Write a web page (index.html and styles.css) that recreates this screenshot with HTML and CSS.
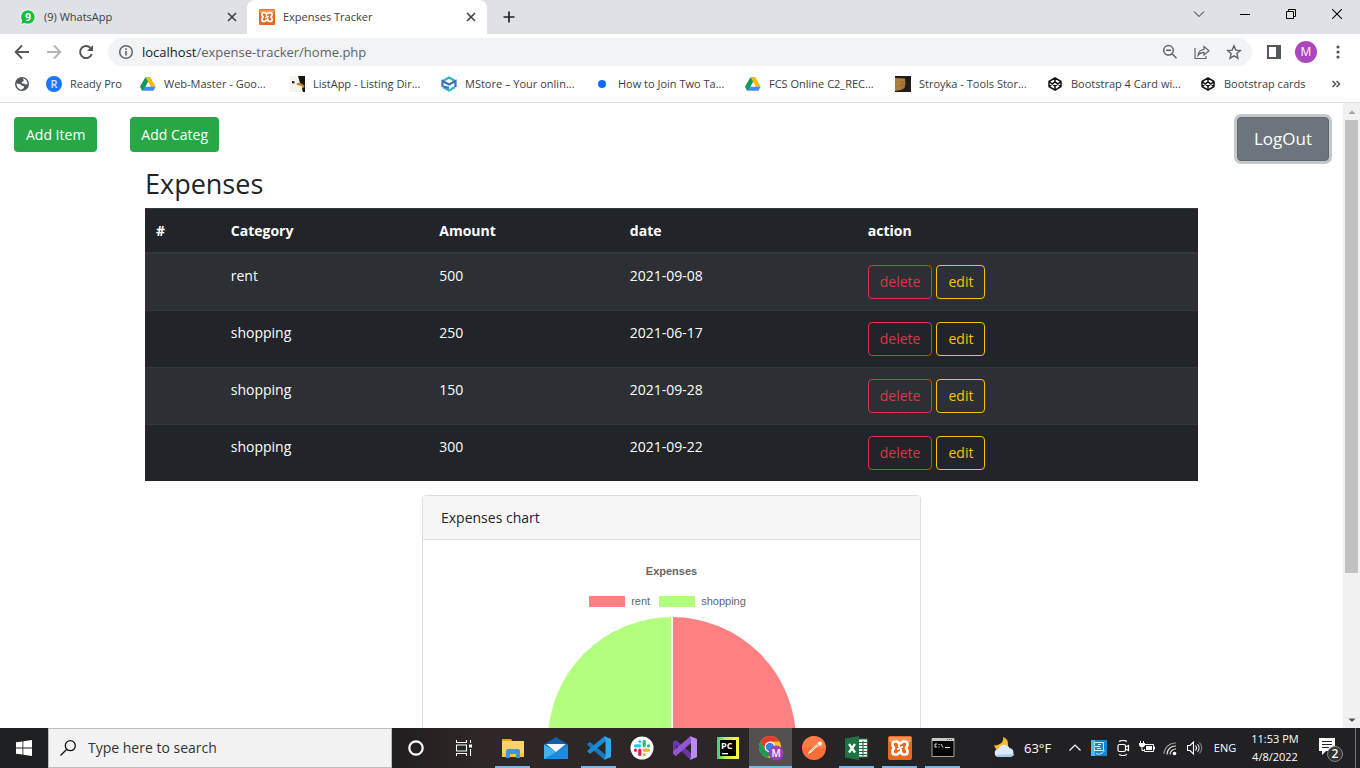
FILE: index.html
```html
<!DOCTYPE html>
<html lang="en">
<head>
<meta charset="utf-8">
<title>Expenses Tracker</title>
<link rel="stylesheet" href="styles.css">
</head>
<body>
<svg class="defs" aria-hidden="true">
  <symbol id="drive" viewBox="0 0 16 16">
    <path fill="#0f9d58" d="M5.4 1.5h5L4 12.6 1.5 14.3.3 10.6z"/>
    <path fill="#ffba00" d="M5.6 1.5h4.9l5.2 9.1h-5z"/>
    <path fill="#4688f4" d="M3 10.6h12.7l-2.4 4.1H2.7L.3 10.6z"/>
    <path fill="#fff" d="M8 6l2.600 4.600H5.300z"/>
    <path fill="#0f9d58" d="M5.400 1.500L8 6 2.700 14.700.300 10.600z"/>
  </symbol>
  <symbol id="codepen" viewBox="0 0 16 16">
    <path fill="none" stroke="#111" stroke-width="1.500" stroke-linejoin="round" d="M8 1.800l6 3.700v5L8 14.200l-6-3.700v-5zM8 1.800v4M8 10.200v4M2 5.500l6 4.700 6-4.700M2 10.500l6-4.700 6 4.700"/>
  </symbol>
  <symbol id="xampp" viewBox="0 0 24 24">
    <rect width="24" height="24" rx="2" fill="#e8681c"/>
    <path d="M1 1h22v5H1z" fill="#f4945a"/>
    <path fill="none" stroke="#fff" stroke-width="2.700" stroke-linejoin="round" d="M8.500 5.500H7a2.500 2.500 0 0 0-2.500 2.500v1C4.500 10.500 6 11 6 12s-1.500 1.500-1.500 3v1A2.500 2.500 0 0 0 7 18.500h1.500c1.500 0 1.500-1.800 3.500-1.800s2 1.800 3.500 1.800H17a2.500 2.500 0 0 0 2.500-2.500v-1c0-1.500-1.500-2-1.500-3s1.500-1.500 1.500-3V8A2.500 2.500 0 0 0 17 5.500h-1.500c-1.500 0-1.500 1.800-3.500 1.800s-2-1.800-3.500-1.800z"/>
    <path fill="none" stroke="#fff" stroke-width="2" d="M9 13.300l6-2.600M11 8v3M13 13v3.500"/>
  </symbol>
  <symbol id="cross" viewBox="0 0 10 10">
    <path fill="none" stroke="currentColor" stroke-width="1.600" d="M1 1l8 8M9 1L1 9"/>
  </symbol>
</svg>

<div class="window">
  <header class="browser">
    <div class="tabstrip">
      <div class="tab">
        <svg class="i16" viewBox="0 0 16 16"><path fill="#12c143" stroke="#fff" stroke-width="1" d="M.5 15.500l1.100-3.900A7.200 7.200 0 1 1 4.700 14.500z"/><text x="8" y="11.500" class="wa">9</text></svg>
        <span class="tab-title">(9) WhatsApp</span>
        <button class="tab-close" aria-label="Close tab"><svg class="i10"><use href="#cross"/></svg></button>
      </div>
      <div class="tab active">
        <svg class="i16"><use href="#xampp"/></svg>
        <span class="tab-title">Expenses Tracker</span>
        <button class="tab-close" aria-label="Close tab"><svg class="i10"><use href="#cross"/></svg></button>
      </div>
      <button class="newtab" aria-label="New tab"><svg class="i12" viewBox="0 0 12 12"><path fill="none" stroke="#202124" stroke-width="1.700" d="M6 .500v11M.500 6h11"/></svg></button>
      <div class="winctl">
        <button aria-label="Search tabs"><svg class="i12" viewBox="0 0 12 12"><path fill="none" stroke="#222" d="M1 3.500l5 5 5-5"/></svg></button>
        <button aria-label="Minimize"><svg class="i10" viewBox="0 0 10 10"><path fill="none" stroke="#000" d="M0 5.500h10"/></svg></button>
        <button aria-label="Restore"><svg class="i10" viewBox="0 0 10 10"><path fill="none" stroke="#000" d="M.500 2.500h7v7h-7zM2.500 2.500v-2h7v7h-2"/></svg></button>
        <button aria-label="Close"><svg class="i10" viewBox="0 0 10 10"><path fill="none" stroke="#000" stroke-width="1.100" d="M0 0l10 10M10 0L0 10"/></svg></button>
      </div>
    </div>

    <div class="toolbar">
      <button class="nav" aria-label="Back"><svg class="i16" viewBox="0 0 16 16"><path fill="none" stroke="#54575b" stroke-width="1.900" d="M15 8H2M8 1.500L1.700 8 8 14.500"/></svg></button>
      <button class="nav" aria-label="Forward"><svg class="i16" viewBox="0 0 16 16"><path fill="none" stroke="#b4b6b9" stroke-width="1.900" d="M1 8h13M8 1.500L14.300 8 8 14.500"/></svg></button>
      <button class="nav" aria-label="Reload"><svg class="i16" viewBox="0 0 16 16"><path fill="none" stroke="#54575b" stroke-width="2" d="M13.800 10A6 6 0 1 1 12.500 4"/><path fill="#54575b" d="M15 1v6H9z"/></svg></button>
      <div class="omnibox">
        <svg class="i16" viewBox="0 0 16 16"><circle cx="8" cy="8" r="6.300" fill="none" stroke="#5f6368" stroke-width="1.500"/><path stroke="#5f6368" stroke-width="1.600" d="M8 7v4.500M8 4.300v1.600"/></svg>
        <a class="url" href="#"><b>localhost</b>/expense-tracker/home.php</a>
        <button class="nav" aria-label="Zoom"><svg class="i16" viewBox="0 0 16 16"><g fill="none" stroke="#5f6368" stroke-width="1.500"><circle cx="6.500" cy="6.300" r="4.800"/><path d="M10 9.800l4.500 4.500M4 6.300h5"/></g></svg></button>
        <button class="nav" aria-label="Share"><svg class="i16" viewBox="0 0 16 16"><path fill="none" stroke="#5f6368" stroke-width="1.200" d="M1 4v10.500h11V12M4 11.300c.500-3.800 2.500-5.500 6-5.800V2.500l5 4.300-5 4.200V8.300C7.500 8.300 5.500 9.300 4 11.300z"/></svg></button>
        <button class="nav" aria-label="Bookmark this page"><svg class="i16" viewBox="0 0 16 16"><path fill="none" stroke="#5f6368" stroke-width="1.400" d="M8 1.800l1.800 4.300 4.600.400-3.500 3.100 1 4.600L8 11.800l-3.900 2.400 1-4.600L1.600 6.500l4.600-.4z"/></svg></button>
      </div>
      <button class="nav" aria-label="Side panel"><svg class="i16" viewBox="0 0 16 16"><path fill="#54575b" d="M1 1h14v14H1zM3 3v10h7V3z" fill-rule="evenodd"/></svg></button>
      <button class="nav" aria-label="Profile"><span class="avatar">M</span></button>
      <button class="nav" aria-label="Menu"><svg class="i16" viewBox="0 0 16 16"><g fill="#54575b"><circle cx="8" cy="3" r="1.600"/><circle cx="8" cy="8" r="1.600"/><circle cx="8" cy="13" r="1.600"/></g></svg></button>
    </div>

    <nav class="bookmarks">
      <a href="#" class="bm globe" aria-label="Apps"><svg class="i16" viewBox="0 0 16 16"><circle cx="8" cy="8" r="7" fill="#54575b"/><path fill="#fff" d="M9 2.500c2.600.4 4.500 2.500 4.500 5.300l-1.700 1-1.700-1.300H8.300L7.500 6.200 9.800 5zM2.500 7.500l4 .7 1.300 1.500 2.400.6-.4 1.800-2 1.500C4.600 13.300 2.500 11 2.500 7.500z"/></svg></a>
      <a href="#" class="bm ready"><svg class="i16" viewBox="0 0 16 16"><circle cx="8" cy="8" r="8" fill="#1877f8"/><text x="8" y="12" class="rr">R</text></svg>Ready Pro</a>
      <div class="bmgrid">
        <a href="#" class="bm"><svg class="i16"><use href="#drive"/></svg>Web-Master - Goo...</a>
        <a href="#" class="bm"><svg class="i16" viewBox="0 0 16 16"><path fill="#f4f4f1" d="M0 0h16v16H0z"/><path fill="#16120f" d="M9 0h7v16h-2l-1-3 1-3-3-3zM3 5l2.500.5V7.500L3 7z"/><path fill="#c9812c" d="M7.500 7.500l3-1 5 3-.5 2.500-3-2-4-1z"/></svg>ListApp - Listing Dir...</a>
        <a href="#" class="bm"><svg class="i16" viewBox="0 0 16 16"><path fill="none" stroke="#35b8c5" stroke-width="2.400" stroke-linejoin="round" d="M2 5l6-3.500L14 5M2 11l6 3.500 6-3.500"/><path fill="none" stroke="#3e6fba" stroke-width="2.200" d="M1.500 11V5L8 8.500 14.500 5v6M3 10.500l5 1.500"/></svg>MStore – Your onlin...</a>
        <a href="#" class="bm"><svg class="i16" viewBox="0 0 16 16"><circle cx="8" cy="8" r="4" fill="#0b6cff"/></svg>How to Join Two Ta...</a>
        <a href="#" class="bm"><svg class="i16"><use href="#drive"/></svg>FCS Online C2_REC...</a>
        <a href="#" class="bm"><svg class="i16" viewBox="0 0 16 16"><path fill="#201c1a" d="M0 0h16v16H0z"/><path fill="#b07b3e" d="M0 2l10 .500.500 5L9.500 12 6 14l-6 1z"/><path stroke="#8a5c2c" d="M6 6h4M5 9h5M6 12h3"/></svg>Stroyka - Tools Stor...</a>
        <a href="#" class="bm"><svg class="i16"><use href="#codepen"/></svg>Bootstrap 4 Card wi...</a>
      </div>
      <a href="#" class="bm last"><svg class="i16"><use href="#codepen"/></svg>Bootstrap cards</a>
      <button class="nav" aria-label="More bookmarks"><svg class="i10" viewBox="0 0 10 10"><path fill="none" stroke="#54575b" stroke-width="1.600" d="M1.500 2L4.500 5 1.500 8M5.500 2l3 3-3 3"/></svg></button>
    </nav>
  </header>

  <div class="viewport">
    <main class="page">
      <div class="actions">
        <button class="btn green">Add Item</button>
        <button class="btn green">Add Categ</button>
        <button class="btn logout">LogOut</button>
      </div>
      <section class="container">
        <h2>Expenses</h2>
        <table>
          <colgroup><col class="c1"><col class="c2"><col class="c3"><col class="c4"><col class="c5"></colgroup>
          <thead><tr><th>#</th><th>Category</th><th>Amount</th><th>date</th><th>action</th></tr></thead>
          <tbody>
            <tr><td></td><td>rent</td><td>500</td><td>2021-09-08</td><td><div class="rowbtns"><button class="btn del">delete</button><button class="btn edit">edit</button></div></td></tr>
            <tr><td></td><td>shopping</td><td>250</td><td>2021-06-17</td><td><div class="rowbtns"><button class="btn del">delete</button><button class="btn edit">edit</button></div></td></tr>
            <tr><td></td><td>shopping</td><td>150</td><td>2021-09-28</td><td><div class="rowbtns"><button class="btn del">delete</button><button class="btn edit">edit</button></div></td></tr>
            <tr><td></td><td>shopping</td><td>300</td><td>2021-09-22</td><td><div class="rowbtns"><button class="btn del">delete</button><button class="btn edit">edit</button></div></td></tr>
          </tbody>
        </table>
      </section>
      <section class="card">
        <div class="card-head">Expenses chart</div>
        <div class="chart">
          <div class="chart-title">Expenses</div>
          <div class="legend"><span class="key red"></span><span>rent</span><span class="key lime"></span><span>shopping</span></div>
          <svg class="pie" viewBox="0 0 248 248"><path fill="#ff8080" d="M124 0a124 124 0 0 1 0 248z"/><path fill="#b2ff80" d="M124 0a124 124 0 0 0 0 248z"/><path stroke="#fff" stroke-width="2" d="M124 0v248"/></svg>
        </div>
      </section>
    </main>
    <div class="scrollbar">
      <span class="arrow"><svg class="i10" viewBox="0 0 10 10"><path fill="#a3a3a3" d="M1.500 7L5 3.500 8.500 7z"/></svg></span>
      <span class="thumb"></span><span class="rest"></span>
      <span class="arrow"><svg class="i10" viewBox="0 0 10 10"><path fill="#505050" d="M1.500 3.500L5 7l3.500-3.500z"/></svg></span>
    </div>
  </div>

  <footer class="taskbar">
    <button class="cell" aria-label="Start"><svg class="i16" viewBox="0 0 16 16"><path fill="#fff" d="M0 2.300L6.500 1.400v6.200H0zM7.300 1.300L16 0v7.600H7.300zM0 8.400h6.500v6.200L0 13.700zM7.300 8.400H16V16l-8.700-1.300z"/></svg></button>
    <label class="search">
      <svg class="i16" viewBox="0 0 16 16"><g fill="none" stroke="#111" stroke-width="1.300"><circle cx="10.300" cy="5.700" r="5"/><path d="M6.800 9.200L.500 15.500"/></g></svg>
      <input type="text" placeholder="Type here to search" aria-label="Type here to search">
    </label>
    <button class="cell" aria-label="Cortana"><svg class="i16" viewBox="0 0 16 16"><circle cx="8" cy="8" r="6.700" fill="none" stroke="#fff" stroke-width="2.200"/></svg></button>
    <button class="cell" aria-label="Task view"><svg class="i16" viewBox="0 0 16 16"><g fill="none" stroke="#fff" stroke-width="1.100"><path d="M.500 0v2.500h10V0M.500 16v-2.500h10V16M.500 5h10v6H.500zM14.500 0v3M14.500 9v7"/></g><path fill="#fff" d="M13 4.500h3v3h-3z"/></svg></button>
    <div class="apps">
      <button class="app run" aria-label="File Explorer"><svg class="i24" viewBox="0 0 24 24"><path fill="#e8a409" d="M1 3h9l2 3H1z"/><path fill="#fdd367" d="M1 5h22v16H1z"/><path fill="#f9c445" d="M1 17h22v4H1z"/><path fill="#3e95dc" d="M5 22v-7a2 2 0 0 1 2-2h10a2 2 0 0 1 2 2v7h-4v-4H9v4z"/></svg></button>
      <button class="app" aria-label="Mail"><svg class="i24" viewBox="0 0 24 24"><path fill="#0d5fb0" d="M0 8.500L12 1l12 7.500-12 7z"/><path fill="#3fb3f0" d="M0 8.500L12 16l12-7.500V23H0z"/><path fill="#1a8be0" d="M0 23L24 8.500V23z"/><path fill="#3fb3f0" d="M0 8.500V23L12 15.500z"/><path fill="#f2f4f7" d="M2 8h20l-10 8z"/></svg></button>
      <button class="app run" aria-label="Visual Studio Code"><svg class="i24" viewBox="0 0 24 24"><path fill="#1479bd" d="M.500 7.500L3 6l16 13v4l-2 .5L.500 9z"/><path fill="#1b8ad3" d="M.500 15.500L3 18 19 5V1L17 .5.500 14.500z"/><path fill="#2fa8f0" d="M17 0l7 3v18l-7 3 1.500-3V3z"/></svg></button>
      <button class="app" aria-label="Slack"><svg class="i24" viewBox="0 0 24 24"><circle cx="12" cy="12" r="11.500" fill="#fff"/><g fill="none" stroke-width="3.200" stroke-linecap="round"><path stroke="#36c5f0" d="M9.800 5.500v.1M5.500 9.800h4.300"/><path stroke="#2eb67d" d="M14.200 5.500v4.300M18.500 9.800v.1"/><path stroke="#ecb22e" d="M14.200 14.200h4.300M14.200 18.500v.1"/><path stroke="#e01e5a" d="M9.800 14.200v4.300M5.500 14.200v.1"/></g></svg></button>
      <button class="app" aria-label="Visual Studio"><svg class="i24" viewBox="0 0 24 24"><path fill="#6a36a8" fill-rule="evenodd" d="M0 5.500L3 4l15 13v6l-1 .5L3 9.500v5L0 18z"/><path fill="#9455d6" d="M0 18l3 2L18 7V1L17 .5 0 15.500z"/><path fill="#b98af0" d="M17 0l7 3v18l-7 3 1-3V3z"/></svg></button>
      <button class="app" aria-label="PyCharm"><svg class="i24" viewBox="0 0 24 24"><defs><linearGradient id="pc"><stop offset="0" stop-color="#21d789"/><stop offset=".4" stop-color="#c8ee48"/><stop offset="1" stop-color="#fcf84a"/></linearGradient></defs><path fill="url(#pc)" d="M1 1h22v22H1z"/><path fill="#000" d="M4 4h16v16H4z"/><text x="5" y="13" class="pc">PC</text><path fill="#fff" d="M6 17h6v1.300H6z"/></svg></button>
      <button class="app run current" aria-label="Chrome"><svg class="i28" viewBox="0 0 28 28"><circle cx="13" cy="13" r="11" fill="#fbc116"/><path fill="#e33b2e" d="M3.500 7.500A11 11 0 0 1 22.500 7.500H13L8 15.500z"/><path fill="#1e9b53" d="M3.500 7.500L8.500 16l5 2-2.500 6A11 11 0 0 1 3.500 7.500z"/><circle cx="13" cy="13" r="5.400" fill="#fff"/><circle cx="13" cy="13" r="4.200" fill="#3b7ded"/><circle cx="19" cy="19" r="7.500" fill="#a63db8"/><text x="19" y="22.500" class="cm">M</text></svg></button>
      <button class="app" aria-label="Postman"><svg class="i24" viewBox="0 0 24 24"><circle cx="12" cy="12" r="12" fill="#ff6c37"/><path fill="#ff8b57" d="M0 12a12 12 0 0 1 24 0z" opacity=".5"/><path fill="#fff" d="M5.500 18.500L8 14.500l6.500-6 1.500 1.500L9.500 16zM15.500 8a2.200 2.200 0 1 1 2 2z"/><path stroke="#ff6c37" stroke-width=".7" d="M8.500 15l6-5"/></svg></button>
      <button class="app run" aria-label="Excel"><svg class="i24" viewBox="0 0 24 24"><path fill="#fff" d="M13 3h9.500v18H13z"/><path fill="none" stroke="#1f7246" stroke-width="1.200" d="M13 3h9.500v18H13M14 6.500h8M14 9.500h8M14 12.500h8M14 15.500h8M14 18.500h8M18 5v15"/><path fill="#1f7246" d="M0 2.500L14 0v24L0 21.500z"/><path stroke="#fff" stroke-width="2.200" d="M4 8l6 8.500M10 8l-6 8.500"/></svg></button>
      <button class="app run" aria-label="XAMPP"><svg class="i24"><use href="#xampp"/></svg></button>
      <button class="app run" aria-label="Command Prompt"><svg class="i24" viewBox="0 0 24 24"><path fill="#050505" stroke="#a5a5a5" d="M1 2.500h22v18H1z"/><path fill="#c8cacc" d="M1 2h22v3H1z"/><path fill="#555" d="M16 3h1v1h-1zM18 3h1v1h-1zM20 3h1v1h-1z"/><path fill="none" stroke="#ddd" d="M6 8H4v3h2M8 8v1M8 10.500v1M10 8l2 3.500M14 11.500h5"/></svg></button>
    </div>
    <div class="tray">
      <button class="weather"><svg class="i24" viewBox="0 0 24 24"><path fill="#fcb827" d="M11 1c1 3.500-1 8-9 8.500C3 12 5 15 9 15s7-3 7-7-2-6-5-7z"/><path fill="#dbe9f8" d="M7 21a4 4 0 0 1-.5-8 6 6 0 0 1 11-1 4.700 4.700 0 0 1 1 9z"/><path fill="#a9cdf3" d="M3.500 19a4 4 0 0 0 3.500 2h11.500a4.700 4.700 0 0 0 4-3z"/></svg>63°F</button>
      <button class="t24" aria-label="Hidden icons"><svg class="i12" viewBox="0 0 12 12"><path fill="none" stroke="#fff" stroke-width="1.200" d="M.500 8.500L6 3l5.500 5.500"/></svg></button>
      <button class="t24" aria-label="Graphics"><svg class="i16" viewBox="0 0 16 16"><path fill="#1384d2" d="M0 0h16v16H0z"/><path fill="#4fb7e9" d="M0 0h4v16H0z"/><g fill="none" stroke="#cfefff"><path d="M3.500 5V2.500h9v8h-9V8M3 6.500h6M6 8.500h4M5 13.500c3 1.500 7 0 8.500-3M7 4.500h3"/></g></svg></button>
      <button class="t24" aria-label="Meet Now"><svg class="i16" viewBox="0 0 16 16"><g fill="none" stroke="#fff" stroke-width="1.200"><rect x="3" y="4.500" width="7.500" height="7" rx="1.500"/><path d="M10.500 7l3-1.500v5l-3-1.500M4 1.500c2.500-1.300 5.500-1.300 8 0M4 14.500c2.500 1.300 5.500 1.300 8 0"/></g></svg></button>
      <button class="t24" aria-label="Battery"><svg class="i16" viewBox="0 0 16 16"><path fill="none" stroke="#fff" d="M4.500 4.500h10v7h-9V9M15.500 6.500v3M1.500 1v3M4.500 1v3M3 7v3.500h2"/><path fill="#fff" d="M0 3h6v2.500L4.500 7h-3L0 5.500zM7 6h6v4H7z"/></svg></button>
      <button class="t24" aria-label="Network"><svg class="i16" viewBox="0 0 16 16"><g fill="none" stroke="#ddd" stroke-width="1.200"><path d="M1 14A11.500 11.500 0 0 1 13 3" opacity=".6"/><path d="M4 14.500A8.500 8.500 0 0 1 13 6M7 14.500A5.700 5.700 0 0 1 13 9"/></g><circle cx="11.500" cy="13.500" r="1.800" fill="#fff"/></svg></button>
      <button class="t24" aria-label="Volume"><svg class="i16" viewBox="0 0 16 16"><g fill="none" stroke="#fff" stroke-width="1.100"><path d="M.500 5.500H3L6.500 2v12L3 10.500H.500zM8.500 5.500q2 2.500 0 5"/><path d="M10.500 4q3.200 4 0 8" opacity=".8"/><path d="M12.500 2.500q4.500 5.500 0 11" opacity=".45"/></g></svg></button>
      <button class="lang">ENG</button>
      <button class="clock"><span>11:53 PM</span><span>4/8/2022</span></button>
      <button class="cell" aria-label="Notifications"><svg class="i28" viewBox="0 0 28 28"><path fill="#fff" d="M2 4h16v13H9l-4 4v-4H2z"/><path stroke="#222" d="M5 7.500h10M5 10.500h10M5 13.500h7"/><circle cx="18" cy="20" r="7.500" fill="#333335" stroke="#858585"/><text x="18" y="24" class="nt">2</text></svg></button>
      <span class="desk"></span>
    </div>
  </footer>
</div>
</body>
</html>
```

FILE: styles.css
```css
* { box-sizing: border-box; }
body {
  margin: 0;
  font-family: "Open Sans", "Noto Sans", sans-serif;
  font-size: 14px;
  line-height: 22px;
  color: #212529;
  background: #fff;
}
button {
  margin: 0;
  padding: 0;
  border: 0;
  background: none;
  font: inherit;
  color: inherit;
}
a { color: inherit; text-decoration: none; }
svg { display: block; flex: none; }
.defs { position: absolute; width: 0; height: 0; }
.i10 { width: 10px; height: 10px; }
.i12 { width: 12px; height: 12px; }
.i16 { width: 16px; height: 16px; }
.i24 { width: 24px; height: 24px; }
.i28 { width: 28px; height: 28px; }

.window { display: flex; flex-direction: column; height: 100vh; overflow: hidden; }

/* Browser frame */
.browser { flex: none; border-bottom: 1px solid #dadce0; font-size: 11px; }
.tabstrip { display: flex; height: 34px; background: #dee1e6; color: #3c4043; }
.tab { display: flex; align-items: center; gap: 8px; width: 247px; padding: 0 10px 0 20px; }
.tab.active { width: 240px; padding-left: 12px; padding-right: 11px; background: #fff; border-radius: 8px 8px 0 0; }
.tab-title { flex: 1; }
.tab-close { display: flex; color: #3c4043; }
.newtab { display: grid; place-items: center; width: 44px; }
.winctl { display: flex; margin-left: auto; height: 28px; }
.winctl button { display: grid; place-items: center; width: 46px; }

.toolbar { display: flex; align-items: center; height: 32px; padding: 4px 6px 0; }
.nav { display: grid; place-items: center; flex: none; width: 32px; height: 28px; }
.omnibox {
  display: flex;
  flex: 1;
  align-items: center;
  height: 28px;
  margin: 0 6px;
  padding: 0 2px 0 10px;
  border-radius: 14px;
  background: #f1f3f4;
}
.url { flex: 1; padding-left: 8px; font-size: 13px; color: #5f6368; }
.url b { font-weight: 400; color: #202124; }
.avatar { width: 22px; height: 22px; border-radius: 50%; background: #ab47bc; color: #fff; font-size: 12px; text-align: center; }

.bookmarks { display: flex; align-items: center; height: 36px; padding: 0 8px 0 14px; color: #3c4043; }
.bm { display: flex; align-items: center; gap: 8px; white-space: nowrap; min-width: 0; }
.globe { width: 32px; }
.ready { width: 94px; }
.bmgrid { display: grid; flex: 1; grid-template-columns: 149fr 152fr 153fr 151fr 150fr 152fr 153fr; }
.last { width: 120px; }

/* Page */
.viewport { display: flex; flex: 1; min-height: 0; }
.page { flex: 1; overflow: hidden; }
.actions { display: flex; align-items: flex-start; padding: 14px 14px 0; }
.btn { height: 35px; padding: 0 12px; border-radius: 4px; }
.green { margin-right: 33px; background: #28a745; color: #fff; }
.green + .green { padding: 0 11px; }
.logout {
  height: 44px;
  margin-left: auto;
  padding: 0 16px;
  border: 1px solid #606970;
  background: #6c757d;
  box-shadow: 0 0 0 3px #c4c8cb;
  color: #fff;
  font-size: 17px;
}
.container { max-width: 1053px; margin: 0 auto; }
h2 { margin: 5px 0 7px; font-size: 27px; line-height: 35px; font-weight: 500; }
table { width: 100%; table-layout: fixed; border-spacing: 0; background: #212529; color: #fff; }
.c1 { width: 7.1%; }
.c2 { width: 19.8%; }
.c3 { width: 18.1%; }
.c4 { width: 22.6%; }
.c5 { width: 32.4%; }
th { padding: 11px 11px 10px; border-top: 1px solid #32383e; border-bottom: 2px solid #32383e; text-align: left; font-weight: 700; }
td { padding: 11px; border-top: 1px solid #32383e; vertical-align: top; }
tbody tr:first-child td { border-top: 0; }
tbody tr:nth-child(odd) { background: #2c3034; }
.rowbtns { display: flex; gap: 4px; }
.rowbtns .btn { height: 34px; padding: 0 11px; border: 1px solid; }
.del { color: #dc3545; }
.edit { color: #ffc107; }

.card { max-width: 499px; margin: 14px auto; border: 1px solid #dfdfdf; border-radius: 4px; }
.card-head { padding: 11px 18px 10px; border-bottom: 1px solid #dfdfdf; background: #f7f7f7; }
.chart {
  display: flex;
  flex-direction: column;
  align-items: center;
  padding: 20px 18px;
  font: 11px/22px "Liberation Sans", Arial, sans-serif;
  color: #666;
}
.chart-title { font-weight: 700; }
.legend { display: flex; align-items: center; gap: 6px; margin: 8px 8px 5px 0; }
.key { width: 36px; height: 11px; }
.red { background: #ff8080; }
.lime { margin-left: 3px; background: #b2ff80; }
.pie { width: 248px; height: 248px; }

.scrollbar { display: flex; flex-direction: column; flex: none; align-items: center; width: 17px; background: #f1f1f1; }
.arrow { display: grid; place-items: center; height: 17px; }
.thumb { flex: 453; width: 13px; background: #c1c1c1; }
.rest { flex: 138; }

/* Taskbar */
.taskbar {
  display: flex;
  flex: none;
  height: 40px;
  background: linear-gradient(90deg, #1d1f21 0, #231f20 30%, #302828 36%, #2c2627 50%, #262425 62%, #212124 75%);
  color: #fff;
  font-size: 12px;
}
.cell { display: grid; place-items: center; width: 48px; }
.search { display: flex; align-items: center; gap: 12px; width: 344px; padding: 0 11px; border: 1px solid #bdbdbd; background: #f2f2f2; }
.search input { flex: 1; min-width: 0; padding: 0; border: 0; outline: 0; background: none; font: inherit; font-size: 14px; color: #333; }
.search input::placeholder { color: #333; opacity: 1; }
.apps { display: flex; padding-left: 3px; }
.app { display: grid; place-items: center; width: 43px; padding-top: 2px; border-bottom: 2px solid transparent; border-left: 4px solid transparent; border-right: 4px solid transparent; }
.app.run { border-image: linear-gradient(#76b9ed, #76b9ed) 0 0 2 0; }
.app.current { border-image: none; border-left: 0; border-right: 0; border-bottom-color: #76b9ed; background: #545051; }
.tray { display: flex; margin-left: auto; }
.weather { display: flex; align-items: center; gap: 8px; width: 71px; }
.t24 { display: grid; place-items: center; width: 24px; }
.lang { width: 36px; font-size: 11px; }
.clock { display: flex; flex-direction: column; justify-content: center; align-items: center; width: 64px; line-height: 18px; font-size: 11px; }
.weather { font-size: 13px; }
.desk { width: 5px; border-left: 1px solid #77777a; }

.wa { font: 700 10px "Open Sans", sans-serif; fill: #fff; text-anchor: middle; }
.rr { font: 600 11px "Open Sans", sans-serif; fill: #d5e6ff; text-anchor: middle; }
.pc { font: 700 9px "Open Sans", sans-serif; fill: #fff; }
.cm { font: 600 10px "Open Sans", sans-serif; fill: #fff; text-anchor: middle; }
.nt { font: 600 12px "Open Sans", sans-serif; fill: #fff; text-anchor: middle; }
```
